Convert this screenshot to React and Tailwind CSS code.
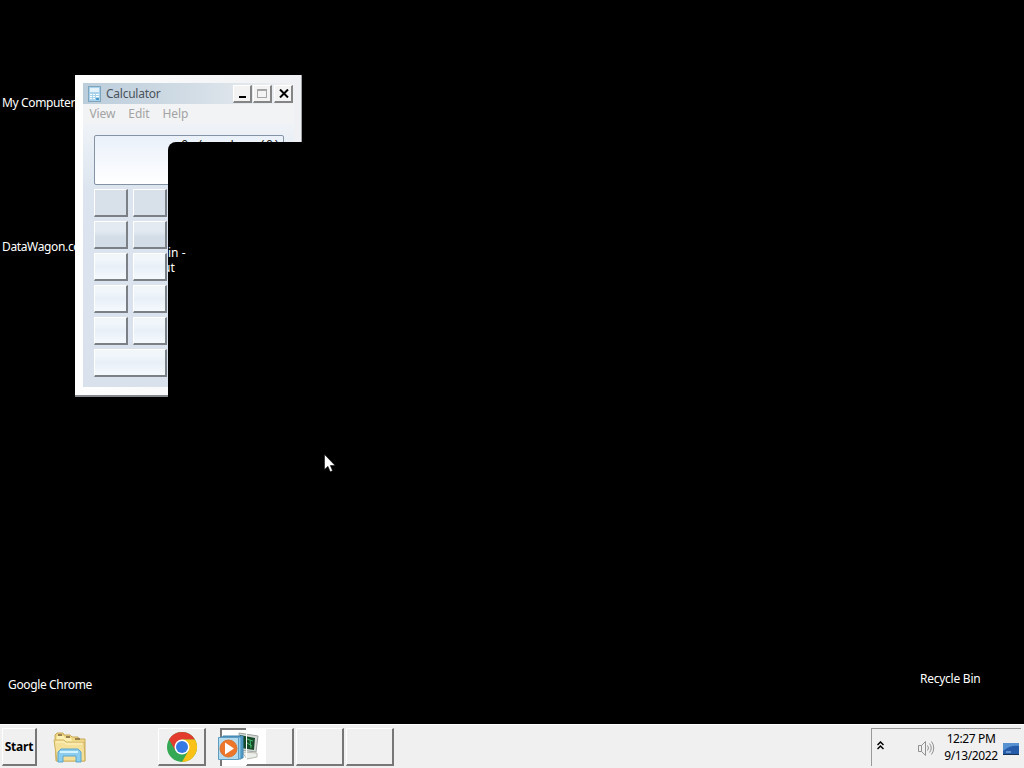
import React from 'react';

const keyRows = [
  ['mc', 'mr'],
  ['back', 'ce'],
  ['7', '8'],
  ['4', '5'],
  ['1', '2'],
];

const keyStyles = [
  'bg-[#d8e0ea]',
  'bg-linear-to-b from-[#e3eaf2] from-35% to-[#d3dde7] to-60%',
  'bg-linear-to-b from-[#f1f6fb] from-20% via-[#e8f0f7] via-50% to-[#f4f9fd]',
  'bg-linear-to-b from-[#f1f6fb] from-20% via-[#e8f0f7] via-50% to-[#f4f9fd]',
  'bg-linear-to-b from-[#f1f6fb] from-20% via-[#e8f0f7] via-50% to-[#f4f9fd]',
];

const Key = ({ className }) => (
  <div className={`h-7 border-t border-l border-r-2 border-b-2 border-t-white border-l-white border-r-[#7b8087] border-b-[#7b8087] ${className}`} />
);

const CalcIcon = () => (
  <svg width="13" height="16" viewBox="0 0 13 16">
    <rect x="0.5" y="0.5" width="12" height="15" fill="#a9d3ec" stroke="#7fa5bd" />
    <rect x="2" y="2" width="9" height="4" fill="#e4f3fb" />
    <g fill="#fff">
      <path d="M2 8h2v1H2zM5 8h2v1H5zM8 8h3v1H8zM2 10h2v1H2zM5 10h2v1H5zM8 10h3v1H8zM2 12h2v1H2zM5 12h2v1H5z" />
    </g>
    <path d="M8 12h3v2H8z" fill="#4a9bcd" />
  </svg>
);

const FolderIcon = () => (
  <svg width="34" height="31" viewBox="0 0 34 31">
    <path d="M2 3l2-2h6l1 2h6l2 2h6l1 2h6v22H3z" fill="#efd983" stroke="#c8a958" />
    <path d="M4 4h7l1 2h6l1 3h12v3H3z" fill="#fcf0b5" />
    <path d="M5 3h4M13 5h4M22 7h5" stroke="#806640" strokeWidth="1.5" />
    <path d="M1 8h10l2 2h18l1 19H4z" fill="#f5e09a" stroke="#cfb25f" />
    <path d="M3 10h8l2 2h16" stroke="#fff4c2" fill="none" />
    <path d="M5 30v-10l3-3h17l3 3v10h-5v-6H10v6z" fill="#8bcdee" stroke="#5ba5cd" />
    <path d="M7 20h18" stroke="#d5f3ff" strokeWidth="2" />
  </svg>
);

const ChromeIcon = () => (
  <svg width="32" height="32" viewBox="0 0 32 32">
    <circle cx="16" cy="16" r="15" fill="#34a853" />
    <path d="M3 8.5A15 15 0 0 1 29 8.5H16L9.5 19.7z" fill="#e33b2e" />
    <path d="M29 8.5A15 15 0 0 1 16 31l6.5-11.3L16 8.5z" fill="#fbc116" />
    <circle cx="16" cy="16" r="7.5" fill="#fff" />
    <circle cx="16" cy="16" r="6" fill="#3478e5" />
  </svg>
);

const PlayerIcon = () => (
  <svg width="26" height="26" viewBox="0 0 26 26">
    <path d="M5 1h20v22H5z" fill="#5ba5cf" stroke="#3c83ad" />
    <path d="M3 2h20v22H3z" fill="#91cbea" stroke="#4389b5" />
    <path d="M.5 2.5h20v22H.5z" fill="#b5dbee" stroke="#5e9dc0" />
    <circle cx="10.5" cy="13.5" r="8.5" fill="#ed762a" stroke="#d9732f" />
    <path d="M7 7.5l9 6-9 6z" fill="#fff" />
  </svg>
);

const MonitorIcon = () => (
  <svg width="22" height="28" viewBox="0 0 22 28">
    <path d="M1 1l19 3-2 16-16-2z" fill="#d5dad7" stroke="#9aa19d" />
    <path d="M2 3l15 3-1 12-13-2z" fill="#174a2a" />
    <path d="M9 7l6 2M9 11l5 3M12 8l1 8" stroke="#40b866" />
    <path d="M4 20l15 1v4l-10 2z" fill="#eceee9" stroke="#b9bbb2" />
  </svg>
);

const TaskButton = ({ className, children }) => (
  <div className={`h-[38px] flex items-center justify-center border-t border-l border-r-2 border-b-2 border-t-white border-l-white border-r-[#777] border-b-[#777] bg-[#f0f0f0] ${className}`}>
    {children}
  </div>
);

const CaptionButton = ({ className, children }) => (
  <div className={`w-[19px] h-[18px] flex justify-center bg-[#f3f3f3] border-t border-l border-r-2 border-b-2 border-t-white border-l-white border-r-[#858585] border-b-[#858585] ${className}`}>
    {children}
  </div>
);

const Calculator = () => (
  <div className="absolute left-[75px] top-[75px] w-[227px] h-[322px] p-2 pr-[7px] flex flex-col bg-linear-to-r from-white to-[#eff0f3] border-r border-b-2 border-r-[#a0a3a7] border-b-[#85898d]">
    <div className="h-[21px] shrink-0 w-[211px] flex items-center bg-linear-to-r from-[#bccddb] via-[#d1dce5] to-[#f0f1f3] pl-[5px] text-[#4b535c]">
      <CalcIcon />
      <span className="ml-[5px] tracking-[-0.25px]">Calculator</span>
      <div className="ml-auto mr-px flex">
        <CaptionButton className="mr-px items-end pb-[3px]">
          <span className="w-[7px] h-0.5 bg-black" />
        </CaptionButton>
        <CaptionButton className="mr-0.5 items-center">
          <span className="w-2.5 h-[9px] border border-t-2 border-[#a5a5a5]" />
        </CaptionButton>
        <CaptionButton className="items-center">
          <svg className="ml-px" width="10" height="9" viewBox="0 0 10 9"><path d="M1 0.5l8 8M9 0.5l-8 8" stroke="#000" strokeWidth="2" /></svg>
        </CaptionButton>
      </div>
    </div>
    <div className="h-5 shrink-0 w-[211px] flex items-center gap-[13px] pl-[6.5px] pb-px bg-[#f2f3f5] text-[#a3a3a3] tracking-[-0.1px]">
      <span>View</span>
      <span>Edit</span>
      <span>Help</span>
    </div>
    <div className="flex-1 w-[211px] px-[11px] pt-[11px] bg-linear-to-b from-[#eff3f8] via-[#dce5ef] via-25% to-[#d9e2ec]">
      <div className="w-[190px] h-[50px] pt-0.5 pr-[3px] border border-[#8494a5] rounded-[2px] bg-linear-to-b from-[#eaf1fa] to-white font-['Liberation_Mono',monospace] text-right text-[12.4px] leading-4 text-[#222]">
        0 / number (0)
      </div>
      <div className="mt-1 flex flex-col gap-1">
        {keyRows.map((row, i) => (
          <div key={i} className="flex gap-[5px]">
            {row.map((k) => <Key key={k} className={`w-[34px] ${keyStyles[i]}`} />)}
          </div>
        ))}
        <Key className={`w-[73px] ${keyStyles[4]}`} />
      </div>
    </div>
  </div>
);

const App = () => {
  return (
    <div className="w-[1024px] h-[768px] overflow-hidden flex flex-col bg-black font-['Noto_Sans','Open_Sans',sans-serif] text-[12px] leading-[15px] select-none">
      {/* desktop */}
      <main className="relative flex-1 overflow-hidden text-white tracking-[-0.36px]">
        <span className="absolute left-[2px] top-[95px] whitespace-nowrap">My Computer</span>
        <span className="absolute left-[2px] top-[239px] whitespace-nowrap">DataWagon.co</span>
        <span className="absolute left-2 top-[677px] whitespace-nowrap">Google Chrome</span>
        <span className="absolute left-[920px] top-[671px] whitespace-nowrap tracking-[-0.25px]">Recycle Bin</span>

        <Calculator />

        {/* unpainted window */}
        <div className="absolute left-[168px] top-[142px] w-[400px] h-[300px] rounded-tl-lg bg-black overflow-hidden tracking-normal">
          <p className="absolute left-0 top-[103px] whitespace-nowrap">in -</p>
          <p className="absolute -left-[5px] top-[118px] whitespace-nowrap">ut</p>
        </div>

        <svg className="absolute left-[324px] top-[454px]" width="12" height="19" viewBox="0 0 12 19">
          <path d="M.5.5v15l3.4-3.2 2.3 5.4 2.4-1-2.3-5.2h4.8z" fill="#fff" stroke="#000" strokeWidth="0.5" />
        </svg>
      </main>

      {/* taskbar */}
      <footer className="h-11 shrink-0 flex items-start pt-[3px] border-t border-white bg-[#f0f0f0]">
        <TaskButton className="w-[35px] ml-[2px] font-bold text-black tracking-[-0.2px]">Start</TaskButton>
        <div className="ml-4 mt-1 w-[34px]"><FolderIcon /></div>
        <TaskButton className="w-12 ml-[71px]"><ChromeIcon /></TaskButton>
        <div className="relative ml-3.5 w-[74px] h-[38px] flex">
          <div className="w-[26px] border-t-2 border-l-2 border-[#777] bg-white" />
          <TaskButton className="w-[48px] bg-linear-to-r from-white from-42% to-[#f0f0f0] to-43%" />
          <div className="absolute left-[18px] top-1"><MonitorIcon /></div>
          <div className="absolute left-[26px] top-0 w-px h-[37px] bg-white" />
          <div className="absolute -left-[2px] top-[7px]"><PlayerIcon /></div>
        </div>
        <TaskButton className="w-12 ml-[2px]" />
        <TaskButton className="w-12 ml-[2px]" />

        <div className="ml-auto mr-[3px] w-[150px] h-[38px] flex items-center border-t border-l border-[#999] text-black">
          <svg className="ml-[5px] -mt-1" width="7" height="9" viewBox="0 0 7 9" fill="none" stroke="#000" strokeWidth="1.5">
            <path d="M.5 4l3-3 3 3M.5 8l3-3 3 3" />
          </svg>
          <svg className="ml-[33px]" width="18" height="16" viewBox="0 0 18 16" fill="none" stroke="#909090">
            <path d="M1.5 5.5h3v6h-3zM4.5 5.5l4-4v14l-4-4M10.5 5.5q2 2.5 0 5M12.5 3.5q3.5 4.5 0 9M14.5 1.5q4.5 6.5 0 13" />
          </svg>
          <div className="ml-[9px] -mt-0.5 w-[54px] text-center leading-[17px] whitespace-nowrap tracking-[-0.4px]">
            <div>12:27 PM</div>
            <div>9/13/2022</div>
          </div>
          <svg className="ml-[5px] mt-0.5" width="16" height="14" viewBox="0 0 16 14">
            <path d="M0 1h16v11H0z" fill="#255ba8" />
            <path d="M0 1h16v3Q7 3 0 9z" fill="#5791d2" />
            <path d="M0 12h16v1H0z" fill="#183256" />
            <path d="M3 10h5" stroke="#a6c7ee" />
          </svg>
        </div>
      </footer>
    </div>
  );
};

export default App;
